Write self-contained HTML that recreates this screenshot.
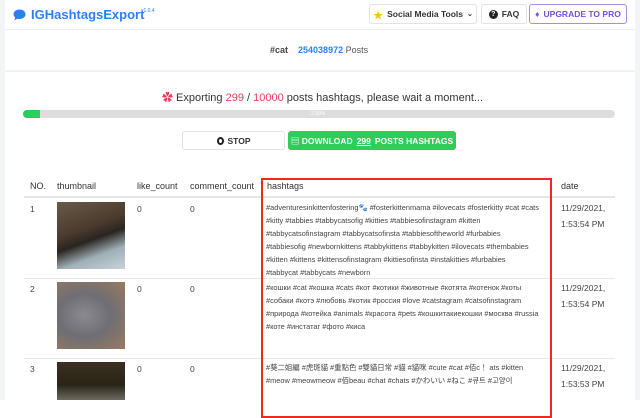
<!DOCTYPE html>
<html><head><meta charset="utf-8"><style>
*{margin:0;padding:0;box-sizing:border-box}
body{width:640px;height:400px;overflow:hidden;background:#fff;font-family:"Liberation Sans","Noto Sans CJK JP",sans-serif;color:#333;position:relative}
.abs{position:absolute;white-space:nowrap}
.btn{position:absolute;border:1px solid #e3e3e3;border-radius:3px;background:#fff;font-size:8.5px;font-weight:bold;color:#333;display:flex;align-items:center;justify-content:center;gap:4px;white-space:nowrap}
.th{position:absolute;top:181px;font-size:9px;color:#333}
.td{position:absolute;font-size:8.5px;color:#444}
.tags{position:absolute;left:266px;font-size:7.4px;line-height:13px;color:#444;white-space:nowrap}
.date{position:absolute;left:561px;font-size:8.5px;line-height:16px;color:#444}
.thumb{position:absolute;left:57px;width:68px;height:67px}
</style></head><body>
<div style="position:absolute;left:0;top:0;width:5px;height:400px;background:#f3f4f6"></div>
<div style="position:absolute;right:0;top:0;width:5px;height:400px;background:#f3f4f6"></div>
<svg class="abs" style="left:13px;top:9px" width="13" height="12" viewBox="0 0 13 12"><path d="M6.5 0.5C3 0.5 0.5 2.6 0.5 5.3c0 1.3.6 2.4 1.6 3.2L1.3 11.3 4.5 9.7c.6.2 1.3.3 2 .3 3.5 0 6-2.1 6-4.7S10 .5 6.5.5z" fill="#2d7ff9"/></svg>
<div class="abs" style="left:31px;top:7px;font-size:13px;font-weight:bold;color:#2d7ff9">IGHashtagsExport</div>
<div class="abs" style="left:141px;top:8px;font-size:5px;color:#2d7ff9">v1.0.4</div>
<div class="btn" style="left:369px;top:4px;width:108px;height:20px"><span style="color:#f5c518;font-size:10px">★</span>Social Media Tools <span style="font-size:7px">⌄</span></div>
<div class="btn" style="left:481px;top:4px;width:46px;height:20px"><span style="display:inline-block;width:9px;height:9px;border-radius:50%;background:#222;color:#fff;font-size:7px;line-height:9px;text-align:center">?</span>FAQ</div>
<div class="btn" style="left:529px;top:4px;width:98px;height:20px;border-color:#a58af0;color:#7c4ddf"><span>♦</span>UPGRADE TO PRO</div>
<div style="position:absolute;left:5px;right:5px;top:29px;height:1px;background:#eee"></div>
<div class="abs" style="left:270px;top:45px;font-size:9px"><b style="color:#444">#cat</b>&nbsp;&nbsp;&nbsp;&nbsp;<b style="color:#2d7ff9">254038972</b> <span style="color:#555">Posts</span></div>
<div style="position:absolute;left:5px;right:5px;top:70px;height:2px;background:#f1f1f3"></div>
<div class="abs" style="left:162px;top:89px;font-size:11px;color:#333"><span style="color:#ef3b5b">✿</span> Exporting <span style="color:#ef3b5b">299</span> / <span style="color:#ef3b5b">10000</span> posts hashtags, please wait a moment...</div>
<div style="position:absolute;left:23px;top:110px;width:592px;height:8px;border-radius:4px;background:#ddd;overflow:hidden"><div style="width:17px;height:8px;background:#2ecc5a"></div></div>
<div class="abs" style="left:311px;top:111px;font-size:5px;color:#fff">2.99%</div>
<div class="btn" style="left:182px;top:131px;width:103px;height:19px"><span style="display:inline-block;width:7px;height:8px;border-radius:50%;border:2px solid #222"></span>STOP</div>
<div class="btn" style="left:288px;top:131px;width:168px;height:19px;background:#2ecc5a;border-color:#2ecc5a;color:#fff">▤ DOWNLOAD <u>299</u> POSTS HASHTAGS</div>
<div class="th" style="left:30px">NO.</div>
<div class="th" style="left:57px">thumbnail</div>
<div class="th" style="left:137px">like_count</div>
<div class="th" style="left:190px">comment_count</div>
<div class="th" style="left:267px">hashtags</div>
<div class="th" style="left:561px">date</div>
<div style="position:absolute;left:24px;width:591px;top:196px;height:2px;background:#e6e6e6"></div>
<div style="position:absolute;left:24px;width:591px;top:278px;height:1px;background:#e8e8e8"></div>
<div style="position:absolute;left:24px;width:591px;top:358px;height:1px;background:#e8e8e8"></div>
<div class="td" style="left:30px;top:204px">1</div><div class="td" style="left:137px;top:204px">0</div><div class="td" style="left:190px;top:204px">0</div>
<div class="td" style="left:30px;top:284px">2</div><div class="td" style="left:137px;top:284px">0</div><div class="td" style="left:190px;top:284px">0</div>
<div class="td" style="left:30px;top:364px">3</div><div class="td" style="left:137px;top:364px">0</div><div class="td" style="left:190px;top:364px">0</div>
<div class="thumb" style="top:202px;background:linear-gradient(160deg,#6b5a48 0%,#4a3b2e 40%,#2a2420 55%,#9fb0b8 75%,#c8d2d8 100%)"></div>
<div class="thumb" style="top:282px;background:radial-gradient(ellipse at 40% 50%,#8a8a90 0%,#6e6e74 45%,#9a7a60 100%)"></div>
<div class="thumb" style="top:362px;height:38px;background:linear-gradient(180deg,#3a3020,#2a2418 60%,#6a6a60)"></div>
<div class="tags" style="top:201px">#adventuresinkittenfostering🐾 #fosterkittenmama #ilovecats #fosterkitty #cat #cats<br>#kitty #tabbies #tabbycatsofig #kitties #tabbiesofinstagram #kitten<br>#tabbycatsofinstagram #tabbycatsofinsta #tabbiesoftheworld #furbabies<br>#tabbiesofig #newbornkittens #tabbykittens #tabbykitten #ilovecats #thembabies<br>#kitten #kittens #kittensofinstagram #kittiesofinsta #instakitties #furbabies<br>#tabbycat #tabbycats #newborn</div>
<div class="tags" style="top:281px">#кошки #cat #кошка #cats #кот #котики #животные #котята #котенок #коты<br>#собаки #котэ #любовь #котик #россия #love #catstagram #catsofinstagram<br>#природа #котейка #animals #красота #pets #кошкитакиекошки #москва #russia<br>#коте #инстатаг #фото #киса</div>
<div class="tags" style="top:361px">#葵二姐編 #虎斑貓 #重點色 #雙貓日常 #貓 #貓咪 #cute #cat #佰c！ ats #kitten<br>#meow #meowmeow #佰beau #chat #chats #かわいい #ねこ #큐트 #고양이</div>
<div class="date" style="top:200px">11/29/2021,<br>1:53:54 PM</div>
<div class="date" style="top:280px">11/29/2021,<br>1:53:54 PM</div>
<div class="date" style="top:360px">11/29/2021,<br>1:53:53 PM</div>
<div style="position:absolute;left:261px;top:178px;width:291px;height:240px;border:2px solid #ee2a1e"></div>
</body></html>
